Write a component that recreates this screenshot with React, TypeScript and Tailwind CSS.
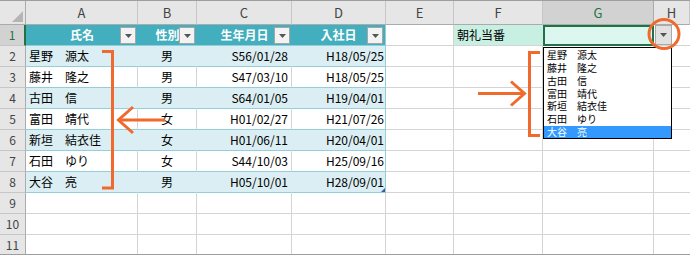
import React from "react";

const letters = ["A", "B", "C", "D", "E", "F", "G", "H"];

const members = [
  ["星野　源太", "男", "S56/01/28", "H18/05/25"],
  ["藤井　隆之", "男", "S47/03/10", "H18/05/25"],
  ["古田　信", "男", "S64/01/05", "H19/04/01"],
  ["富田　靖代", "女", "H01/02/27", "H21/07/26"],
  ["新垣　結衣佳", "女", "H01/06/11", "H20/04/01"],
  ["石田　ゆり", "女", "S44/10/03", "H25/09/16"],
  ["大谷　亮", "男", "H05/10/01", "H28/09/01"],
];

const Arrow = () => (
  <svg width="7" height="4" viewBox="0 0 7 4">
    <polygon points="0,0 7,0 3.5,4" fill="#555" />
  </svg>
);

const FilterButton = () => (
  <span className="absolute right-[2px] top-[2px] w-[16px] h-[17px] bg-[#f3f3f3] border border-[#a6a6a6] flex items-center justify-center">
    <Arrow />
  </span>
);

const RowHeader = ({ n, active }: { n: number; active?: boolean }) => (
  <div
    className={
      active
        ? "bg-[#d2d2d2] text-[#217346] border-r-2 border-r-[#217346] border-b border-b-[#c6c6c6] flex items-center justify-center"
        : "bg-[#e6e6e6] text-[#444] border-r border-r-[#ababab] border-b border-b-[#c6c6c6] flex items-center justify-center"
    }
  >
    {n}
  </div>
);

const Blank = ({ last }: { last?: boolean }) => (
  <div className={last ? "border-b border-[#d4d4d4]" : "border-r border-b border-[#d4d4d4]"} />
);

export default function App() {
  return (
    <div className="relative w-[690px] h-[255px] overflow-hidden bg-white border-t border-b border-[#9e9e9e] font-['Noto_Sans_CJK_JP',sans-serif] text-[12px] leading-none text-black">
      <div className="grid grid-cols-[26px_112px_59px_95px_94px_68px_89px_111px_36px] grid-rows-[24px_repeat(11,21px)]">
        {/* column headers */}
        <div className="bg-[#e6e6e6] border-r border-b border-[#ababab] flex items-end justify-end p-[2px]">
          <svg width="11" height="11" viewBox="0 0 11 11">
            <polygon points="11,0 11,11 0,11" fill="#b5b5b5" />
          </svg>
        </div>
        {letters.map((l) => (
          <div
            key={l}
            className={
              l === "G"
                ? "bg-[#d2d2d2] text-[#217346] border-r border-r-[#ababab] border-b border-b-[#ababab] flex items-center justify-center text-[13px]"
                : "bg-[#e6e6e6] text-[#444] border-r border-r-[#c6c6c6] border-b border-b-[#ababab] flex items-center justify-center text-[13px]"
            }
          >
            {l}
          </div>
        ))}

        {/* row 1 */}
        <RowHeader n={1} active />
        {["氏名", "性別", "生年月日", "入社日"].map((h, i) => (
          <div
            key={h}
            className={
              "relative bg-[#43aebd] border-b border-b-[#93cfd8] flex items-center justify-center text-white font-bold " +
              (i === 3 ? "border-r border-r-[#93cfd8]" : "")
            }
          >
            {h}
            <FilterButton />
          </div>
        ))}
        <Blank />
        <div className="bg-[#c7f0e2] border-b border-b-[#d4d4d4] flex items-center pl-[3px]">朝礼当番</div>
        <div className="bg-[#dcf7ef] border-2 border-[#217346]" />
        <Blank last />

        {/* table rows */}
        {members.map((m, i) => {
          const band = i % 2 === 0;
          const fill = band ? "bg-[#daeef3]" : "bg-white";
          const inner = band ? "border-r border-r-[#daeef3]" : "border-r border-r-[#d4d4d4]";
          return (
            <React.Fragment key={m[0]}>
              <RowHeader n={i + 2} />
              <div className={`${fill} ${inner} border-b border-b-[#93cfd8] flex items-center pl-[3px]`}>{m[0]}</div>
              <div className={`${fill} ${inner} border-b border-b-[#93cfd8] flex items-center justify-center`}>{m[1]}</div>
              <div className={`${fill} ${inner} border-b border-b-[#93cfd8] flex items-center justify-end pr-[3px]`}>{m[2]}</div>
              <div className={`relative ${fill} border-r border-r-[#93cfd8] border-b border-b-[#93cfd8] flex items-center justify-end pr-[1px]`}>
                {m[3]}
                {i === members.length - 1 && (
                  <svg className="absolute right-0 bottom-0" width="4" height="4" viewBox="0 0 4 4">
                    <polygon points="4,0 4,4 0,4" fill="#3d5aa8" />
                  </svg>
                )}
              </div>
              <Blank />
              <Blank />
              <Blank />
              <Blank last />
            </React.Fragment>
          );
        })}

        {/* empty rows */}
        {[9, 10, 11].map((n) => (
          <React.Fragment key={n}>
            <RowHeader n={n} />
            {letters.map((l) => (
              <Blank key={l} last={l === "H"} />
            ))}
          </React.Fragment>
        ))}
      </div>

      {/* validation dropdown button */}
      <div className="absolute left-[655px] top-[24px] w-[17px] h-[20px] bg-[#e1e1e1] border border-[#a9a9a9] flex items-center justify-center">
        <Arrow />
      </div>

      {/* validation list */}
      <div className="absolute left-[543px] top-[46px] w-[129px] h-[92px] bg-white border border-black pt-[1px] text-[10px]">
        {members.map((m, i) => (
          <div
            key={m[0]}
            className={
              "h-[12.75px] flex items-center leading-none pl-[3px] whitespace-nowrap " +
              (i === members.length - 1 ? "bg-[#3399ff] text-white" : "text-black")
            }
          >
            {m[0]}
          </div>
        ))}
      </div>

      {/* annotations */}
      <svg className="absolute left-0 top-0 pointer-events-none" width="690" height="255" viewBox="0 0 690 255">
        <g fill="none" stroke="#ef6a2c" strokeWidth="3">
          <polyline points="102,50.5 112.5,50.5 112.5,187 102,187" />
          <line x1="118" y1="119" x2="165" y2="119" />
          <polyline points="133,106 118.5,119 133,132" />
          <polyline points="540,51.5 529.5,51.5 529.5,134.5 540,134.5" />
          <line x1="478" y1="92.5" x2="525" y2="92.5" />
          <polyline points="511,80.5 524.5,92.5 511,104.5" />
          <ellipse cx="664" cy="33" rx="15" ry="14.5" />
        </g>
      </svg>
    </div>
  );
}
